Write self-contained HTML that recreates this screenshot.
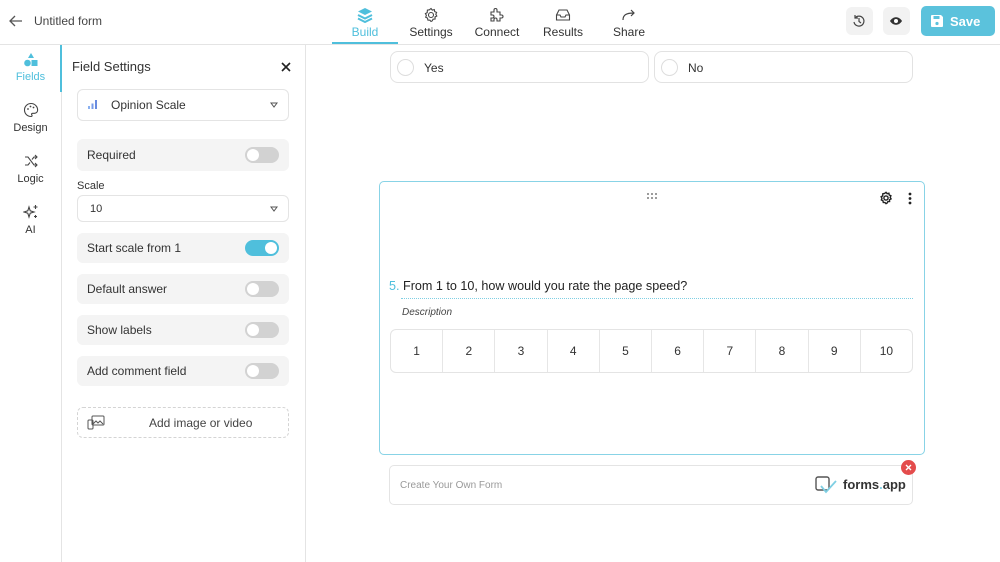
<!DOCTYPE html>
<html><head><meta charset="utf-8"><style>
*{box-sizing:border-box;margin:0;padding:0}
body{width:1000px;height:562px;overflow:hidden;background:#fff;font-family:"Liberation Sans",sans-serif;color:#333;position:relative}
.a{position:absolute}
.row{position:absolute;left:77px;width:212px;background:#f4f4f4;border-radius:6px;font-size:12px;color:#333;padding-left:10px;display:flex;align-items:center}
.tg{position:absolute;right:10px;top:50%;margin-top:-8px;width:34px;height:16px;border-radius:8px;background:#d2d2d2}
.tg:after{content:"";position:absolute;left:2px;top:2px;width:12px;height:12px;border-radius:50%;background:#fff}
.tg.on{background:#4fbfdc}.tg.on:after{left:20px}
.nav{position:absolute;top:0;width:66px;text-align:center;font-size:12px;color:#333}
.nav svg{display:block;margin:7px auto 0}
.nav span{display:block;margin-top:2px}
.ln{position:absolute;text-align:center;width:61px;left:0;font-size:11px;color:#333}
.ln svg{display:block;margin:0 auto 4px}
.cell{flex:1;border-right:1px solid #e6e6e6;display:flex;align-items:center;justify-content:center;font-size:12px;color:#333}
</style></head><body>
<div class="a" style="left:0;top:44px;width:1000px;height:1px;background:#e4e4e4"></div>
<svg class="a" style="left:9px;top:15px" width="14" height="12" viewBox="0 0 14 12"><path d="M13 6H1M6 1L1 6l5 5" fill="none" stroke="#555" stroke-width="1.3"/></svg>
<div class="a" style="left:34px;top:14px;font-size:12px;color:#444">Untitled form</div>

<div class="nav" style="left:332px;color:#4fbfdc"><svg width="16" height="16" viewBox="0 0 16 16"><path d="M8 1l7 3.5L8 8 1 4.5z" fill="#4fbfdc"/><path d="M1 8l7 3.5L15 8M1 11.5L8 15l7-3.5" fill="none" stroke="#4fbfdc" stroke-width="2"/></svg><span>Build</span></div>
<div class="a" style="left:332px;top:42px;width:66px;height:2px;background:#4fbfdc"></div>
<div class="nav" style="left:398px"><svg width="16" height="16" viewBox="0 0 16 16"><circle cx="8" cy="8" r="2.5" fill="none" stroke="#444" stroke-width="1.1"/><path d="M8 1.5l1.3 1.6 2-.5.4 2 1.9.8-.8 1.9 1 1.7-1.8 1 .1 2-2 .2-1 1.8L8 14.5l-1.1-1.3-2-.1-.4-2-1.8-.9.7-1.9-1-1.700 1.8-1L4.4 3.1l2-.3z" fill="none" stroke="#444" stroke-width="1.1"/></svg><span>Settings</span></div>
<div class="nav" style="left:464px"><svg width="16" height="16" viewBox="0 0 16 16"><path d="M2 5h3V3a1.5 1.5 0 013 0v2h3v3h1.5a1.5 1.5 0 010 3H11v3H8v-1.5a1.5 1.5 0 00-3 0V14H2v-3h1.5a1.5 1.5 0 000-3H2z" fill="none" stroke="#444" stroke-width="1.1"/></svg><span>Connect</span></div>
<div class="nav" style="left:530px"><svg width="16" height="16" viewBox="0 0 16 16"><path d="M1.5 8L4 3h8l2.5 5v5h-13zM1.5 8H5l1 2h4l1-2h3.5" fill="none" stroke="#444" stroke-width="1.1"/></svg><span>Results</span></div>
<div class="nav" style="left:596px"><svg width="16" height="16" viewBox="0 0 16 16"><path d="M2 13c0-5 3-7 11-7M10 3l3 3-3 3" fill="none" stroke="#444" stroke-width="1.2"/></svg><span>Share</span></div>

<div class="a" style="left:846px;top:7px;width:27px;height:28px;border-radius:6px;background:#f2f2f2"></div>
<svg class="a" style="left:852px;top:14px" width="14" height="14" viewBox="0 0 14 14"><path d="M3 4a5 5 0 11-1 4M3 1v3h3M7 4v3.5l2 1.5" fill="none" stroke="#444" stroke-width="1.2"/></svg>
<div class="a" style="left:883px;top:7px;width:27px;height:28px;border-radius:6px;background:#f2f2f2"></div>
<svg class="a" style="left:889px;top:15px" width="14" height="12" viewBox="0 0 14 12"><path d="M1 6c3-5 9-5 12 0-3 5-9 5-12 0z" fill="#333"/><circle cx="7" cy="6" r="2" fill="#fff"/></svg>
<div class="a" style="left:921px;top:6px;width:74px;height:30px;border-radius:5px;background:#5bc2dc"></div>
<svg class="a" style="left:930px;top:14px" width="14" height="14" viewBox="0 0 14 14"><path d="M1 2a1 1 0 011-1h9l2 2v9a1 1 0 01-1 1H2a1 1 0 01-1-1z" fill="#fff"/><rect x="3.5" y="2" width="6" height="3" fill="#5bc2dc"/><circle cx="7" cy="9.5" r="1.6" fill="#5bc2dc"/></svg>
<div class="a" style="left:950px;top:14px;font-size:13px;font-weight:bold;color:#fff">Save</div>

<div class="a" style="left:61px;top:45px;width:1px;height:517px;background:#e4e4e4"></div>
<div class="a" style="left:60px;top:45px;width:2px;height:47px;background:#4fbfdc"></div>
<div class="ln" style="top:53px;color:#4fbfdc"><svg width="16" height="14" viewBox="0 0 16 14"><path d="M8 0l3 5H5z" fill="#4fbfdc"/><circle cx="4.5" cy="10" r="3.3" fill="#4fbfdc"/><rect x="8.5" y="7" width="6" height="6" fill="#4fbfdc"/></svg>Fields</div>
<div class="ln" style="top:102px"><svg width="16" height="16" viewBox="0 0 16 16"><path d="M8 1.5a6.5 6.5 0 000 13c1.2 0 1.3-1 .8-1.6s-.3-1.6.8-1.6h2a3 3 0 003-3A6.5 6.5 0 008 1.5z" fill="none" stroke="#444" stroke-width="1.1"/><circle cx="5" cy="7" r=".9" fill="#444"/><circle cx="7.5" cy="4.5" r=".9" fill="#444"/><circle cx="10.5" cy="5.5" r=".9" fill="#444"/></svg>Design</div>
<div class="ln" style="top:153px"><svg width="16" height="16" viewBox="0 0 16 16"><path d="M2 4h3l6 8h3M2 12h3l2-2.5M9 6.5L11 4h3M12 2l2 2-2 2M12 10l2 2-2 2" fill="none" stroke="#444" stroke-width="1.1"/></svg>Logic</div>
<div class="ln" style="top:204px"><svg width="16" height="16" viewBox="0 0 16 16"><path d="M6 3l1.2 3.8L11 8l-3.8 1.2L6 13l-1.2-3.8L1 8l3.8-1.2z" fill="none" stroke="#444" stroke-width="1.1"/><path d="M12.5 1v4M10.5 3h4M12.5 11v3M11 12.5h3" stroke="#444" stroke-width="1.1"/></svg>AI</div>

<div class="a" style="left:305px;top:45px;width:1px;height:517px;background:#e4e4e4"></div>
<div class="a" style="left:72px;top:59px;font-size:13px;color:#333">Field Settings</div>
<svg class="a" style="left:281px;top:62px" width="10" height="10" viewBox="0 0 10 10"><path d="M1 1l8 8M9 1L1 9" stroke="#222" stroke-width="1.6"/></svg>
<div class="a" style="left:77px;top:89px;width:212px;height:32px;border:1px solid #e4e4e4;border-radius:6px"></div>
<svg class="a" style="left:88px;top:100px" width="9" height="9" viewBox="0 0 9 9"><rect x="0" y="6" width="2" height="3" fill="#8ab0f0"/><rect x="3.5" y="3.5" width="2" height="5.5" fill="#7a9ce8"/><rect x="7" y="0" width="2" height="9" fill="#6a8ce0"/></svg>
<div class="a" style="left:111px;top:98px;font-size:12px;color:#333">Opinion Scale</div>
<svg class="a" style="left:270px;top:102px" width="8" height="6" viewBox="0 0 8 6"><path d="M1 1h6L4 5z" fill="none" stroke="#555"/></svg>
<div class="row" style="top:139px;height:32px">Required<div class="tg"></div></div>
<div class="a" style="left:77px;top:180px;font-size:11px;color:#333">Scale</div>
<div class="a" style="left:77px;top:195px;width:212px;height:27px;border:1px solid #e4e4e4;border-radius:6px"></div>
<div class="a" style="left:90px;top:203px;font-size:11px;color:#333">10</div>
<svg class="a" style="left:270px;top:206px" width="8" height="6" viewBox="0 0 8 6"><path d="M1 1h6L4 5z" fill="none" stroke="#555"/></svg>
<div class="row" style="top:233px;height:30px">Start scale from 1<div class="tg on"></div></div>
<div class="row" style="top:274px;height:30px">Default answer<div class="tg"></div></div>
<div class="row" style="top:315px;height:30px">Show labels<div class="tg"></div></div>
<div class="row" style="top:356px;height:30px">Add comment field<div class="tg"></div></div>
<div class="a" style="left:77px;top:407px;width:212px;height:31px;border:1px dashed #d4d4d4;border-radius:6px"></div>
<svg class="a" style="left:87px;top:415px" width="18" height="15" viewBox="0 0 18 15"><rect x="5" y="1" width="12" height="9" rx="1" fill="none" stroke="#555"/><path d="M6 9l3-3 2 2 2-2 3 3" fill="none" stroke="#555"/><rect x="1" y="5" width="5" height="9" rx="1" fill="none" stroke="#555"/></svg>
<div class="a" style="left:149px;top:416px;font-size:12px;color:#444">Add image or video</div>

<div class="a" style="left:390px;top:51px;width:259px;height:32px;border:1px solid #e2e2e2;border-radius:8px"></div>
<div class="a" style="left:397px;top:59px;width:17px;height:17px;border:1px solid #ddd;border-radius:50%"></div>
<div class="a" style="left:424px;top:61px;font-size:12px;color:#333">Yes</div>
<div class="a" style="left:654px;top:51px;width:259px;height:32px;border:1px solid #e2e2e2;border-radius:8px"></div>
<div class="a" style="left:661px;top:59px;width:17px;height:17px;border:1px solid #ddd;border-radius:50%"></div>
<div class="a" style="left:688px;top:61px;font-size:12px;color:#333">No</div>

<div class="a" style="left:379px;top:181px;width:546px;height:274px;border:1px solid #88d3e6;border-radius:5px"></div>
<svg class="a" style="left:647px;top:193px" width="10" height="6" viewBox="0 0 10 6"><g fill="#555"><circle cx="1" cy="1" r=".9"/><circle cx="5" cy="1" r=".9"/><circle cx="9" cy="1" r=".9"/><circle cx="1" cy="5" r=".9"/><circle cx="5" cy="5" r=".9"/><circle cx="9" cy="5" r=".9"/></g></svg>
<svg class="a" style="left:879px;top:191px" width="14" height="14" viewBox="0 0 16 16"><circle cx="8" cy="8" r="2.4" fill="none" stroke="#222" stroke-width="1.6"/><path d="M8 1.5l1.3 1.6 2-.5.4 2 1.9.8-.8 1.9 1 1.7-1.8 1 .1 2-2 .2-1 1.8L8 14.5l-1.1-1.3-2-.1-.4-2-1.8-.9.7-1.9-1-1.7 1.8-1L4.4 3.1l2-.3z" fill="none" stroke="#222" stroke-width="1.6"/></svg>
<svg class="a" style="left:908px;top:192px" width="4" height="13" viewBox="0 0 4 13"><g fill="#222"><circle cx="2" cy="2" r="1.4"/><circle cx="2" cy="6.5" r="1.4"/><circle cx="2" cy="11" r="1.4"/></g></svg>
<div class="a" style="left:389px;top:279px;font-size:12.6px;color:#222"><span style="color:#4fbfdc">5.</span> From 1 to 10, how would you rate the page speed?</div>
<div class="a" style="left:401px;top:298px;width:512px;border-top:1px dotted #7fcfe3"></div>
<div class="a" style="left:402px;top:307px;font-size:10px;font-style:italic;color:#444">Description</div>
<div class="a" style="left:390px;top:329px;width:523px;height:44px;border:1px solid #e4e4e4;border-radius:6px;display:flex;overflow:hidden">
<div class="cell">1</div><div class="cell">2</div><div class="cell">3</div><div class="cell">4</div><div class="cell">5</div><div class="cell">6</div><div class="cell">7</div><div class="cell">8</div><div class="cell">9</div><div class="cell" style="border-right:0">10</div></div>

<div class="a" style="left:389px;top:465px;width:524px;height:40px;border:1px solid #e4e4e4;border-radius:5px"></div>
<div class="a" style="left:400px;top:480px;font-size:10px;color:#999">Create Your Own Form</div>
<svg class="a" style="left:815px;top:474px" width="24" height="21" viewBox="0 0 24 21"><rect x="1" y="3" width="13" height="13" rx="2" fill="none" stroke="#555" stroke-width="1.4"/><path d="M6 12l5 6 10-11" fill="none" stroke="#7fcfe3" stroke-width="1.8"/></svg>
<div class="a" style="left:843px;top:477px;font-size:13px;font-weight:bold;color:#333">forms<span style="color:#7fcfe3">.</span>app</div>
<div class="a" style="left:901px;top:460px;width:15px;height:15px;border-radius:50%;background:#e44c4c"></div>
<svg class="a" style="left:905px;top:464px" width="7" height="7" viewBox="0 0 7 7"><path d="M1 1l5 5M6 1L1 6" stroke="#fff" stroke-width="1.4"/></svg>
</body></html>
